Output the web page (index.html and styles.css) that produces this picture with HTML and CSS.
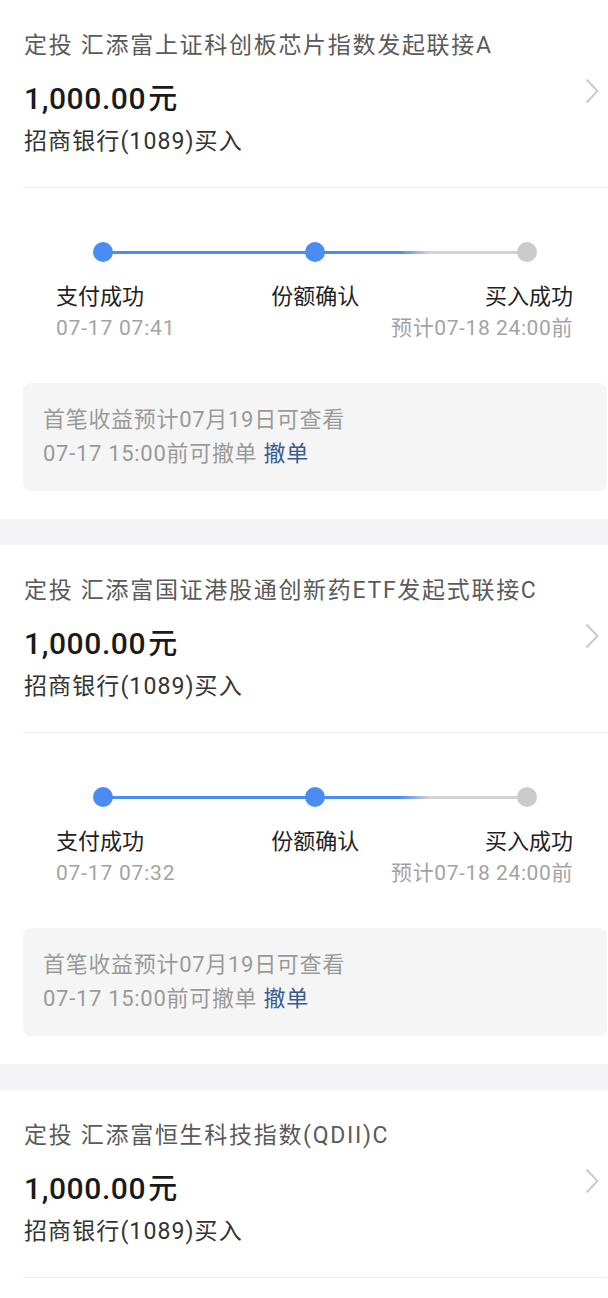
FILE: index.html
```html
<!DOCTYPE html>
<html lang="zh-CN">
<head>
    <meta charset="UTF-8">
    <meta name="viewport" content="width=device-width, initial-scale=1.0">
    <title>定投记录</title>
    <link rel="stylesheet" href="styles.css">
</head>
<body>
    <div class="card">
        <div class="head">
            <div class="info">
                <p class="title">定投 汇添富上证科创板芯片指数发起联接A</p>
                <p class="amount">1,000.00<span class="unit">元</span></p>
                <p class="bank">招商银行(1089)买入</p>
            </div>
            <svg class="arrow" width="14" height="26" viewBox="0 0 14 26"><polyline points="1.5,1.5 12.5,13 1.5,24.5" fill="none" stroke="#cacaca" stroke-width="2"/></svg>
        </div>
        <div class="steps">
            <div class="track">
                <span class="line"></span>
                <span class="dot on"></span>
                <span class="dot on"></span>
                <span class="dot"></span>
            </div>
            <div class="labels">
                <div class="step left"><p class="name">支付成功</p><p class="time">07-17 07:41</p></div>
                <div class="step mid"><p class="name">份额确认</p></div>
                <div class="step right"><p class="name">买入成功</p><p class="time">预计07-18 24:00前</p></div>
            </div>
        </div>
        <div class="tip">
            <p>首笔收益预计07月19日可查看</p>
            <p>07-17 15:00前可撤单 <a class="undo">撤单</a></p>
        </div>
    </div>

    <div class="card">
        <div class="head">
            <div class="info">
                <p class="title">定投 汇添富国证港股通创新药ETF发起式联接C</p>
                <p class="amount">1,000.00<span class="unit">元</span></p>
                <p class="bank">招商银行(1089)买入</p>
            </div>
            <svg class="arrow" width="14" height="26" viewBox="0 0 14 26"><polyline points="1.5,1.5 12.5,13 1.5,24.5" fill="none" stroke="#cacaca" stroke-width="2"/></svg>
        </div>
        <div class="steps">
            <div class="track">
                <span class="line"></span>
                <span class="dot on"></span>
                <span class="dot on"></span>
                <span class="dot"></span>
            </div>
            <div class="labels">
                <div class="step left"><p class="name">支付成功</p><p class="time">07-17 07:32</p></div>
                <div class="step mid"><p class="name">份额确认</p></div>
                <div class="step right"><p class="name">买入成功</p><p class="time">预计07-18 24:00前</p></div>
            </div>
        </div>
        <div class="tip">
            <p>首笔收益预计07月19日可查看</p>
            <p>07-17 15:00前可撤单 <a class="undo">撤单</a></p>
        </div>
    </div>

    <div class="card last">
        <div class="head">
            <div class="info">
                <p class="title">定投 汇添富恒生科技指数(QDII)C</p>
                <p class="amount">1,000.00<span class="unit">元</span></p>
                <p class="bank">招商银行(1089)买入</p>
            </div>
            <svg class="arrow" width="14" height="26" viewBox="0 0 14 26"><polyline points="1.5,1.5 12.5,13 1.5,24.5" fill="none" stroke="#cacaca" stroke-width="2"/></svg>
        </div>
    </div>
</body>
</html>
```

FILE: styles.css
```css
*{
    margin: 0;
    padding: 0;
    box-sizing: border-box;
}
body{
    background-color: #f4f4f6;
    font-family: Roboto, "Noto Sans CJK SC", sans-serif;
    color: #222;
}
.card{
    background-color: #fff;
    padding: 31px 1px 28px 23px;
    margin-bottom: 26px;
}
.card.last{
    padding-bottom: 20px;
    margin-bottom: 0;
}
.head{
    display: flex;
    align-items: center;
    padding: 0 8px 30px 1px;
    border-bottom: 1px solid #ececec;
}
.info{
    flex: 1;
}
.arrow{
    margin-bottom: 6px;
}
.title{
    font-size: 23px;
    line-height: 30px;
    letter-spacing: 1.7px;
    color: #5a5a5a;
    white-space: nowrap;
}
.amount{
    margin-top: 20px;
    font-size: 30px;
    line-height: 36px;
    font-weight: 500;
    letter-spacing: 0.6px;
    color: #1a1a1a;
}
.unit{
    margin-left: 2px;
    font-size: 29px;
}
.bank{
    margin-top: 10px;
    font-size: 23px;
    line-height: 30px;
    letter-spacing: 1.1px;
    color: #333;
}
.steps{
    padding: 54px 34px 0 33px;
}
.track{
    position: relative;
    display: flex;
    justify-content: space-between;
    padding: 0 36px 0 37px;
}
.line{
    position: absolute;
    left: 47px;
    right: 46px;
    top: 9px;
    height: 3px;
    background: linear-gradient(to right, #4a8df2 0%, #4a8df2 70%, #d3d3d3 77%, #d3d3d3 100%);
}
.dot{
    position: relative;
    width: 20px;
    height: 20px;
    border-radius: 50%;
    background-color: #cbcbcb;
}
.dot.on{
    background-color: #4a8df2;
}
.labels{
    display: grid;
    grid-template-columns: 1fr 1fr 1fr;
    margin-top: 20px;
}
.step{
    white-space: nowrap;
}
.mid{
    padding-left: 16px;
    text-align: center;
}
.right{
    text-align: right;
}
.name{
    font-size: 22px;
    line-height: 30px;
    color: #222;
}
.time{
    margin-top: 3px;
    font-size: 21px;
    line-height: 26px;
    letter-spacing: 0.8px;
    color: #a3a3a3;
}
.right .time{
    letter-spacing: 0.6px;
}
.tip{
    margin-top: 42px;
    background-color: #f5f5f5;
    border-radius: 8px;
    padding: 20px 20px 20px;
    font-size: 22px;
    line-height: 34px;
    letter-spacing: 0.7px;
    color: #9a9a9a;
}
.undo{
    color: #3b5b8f;
}
```
